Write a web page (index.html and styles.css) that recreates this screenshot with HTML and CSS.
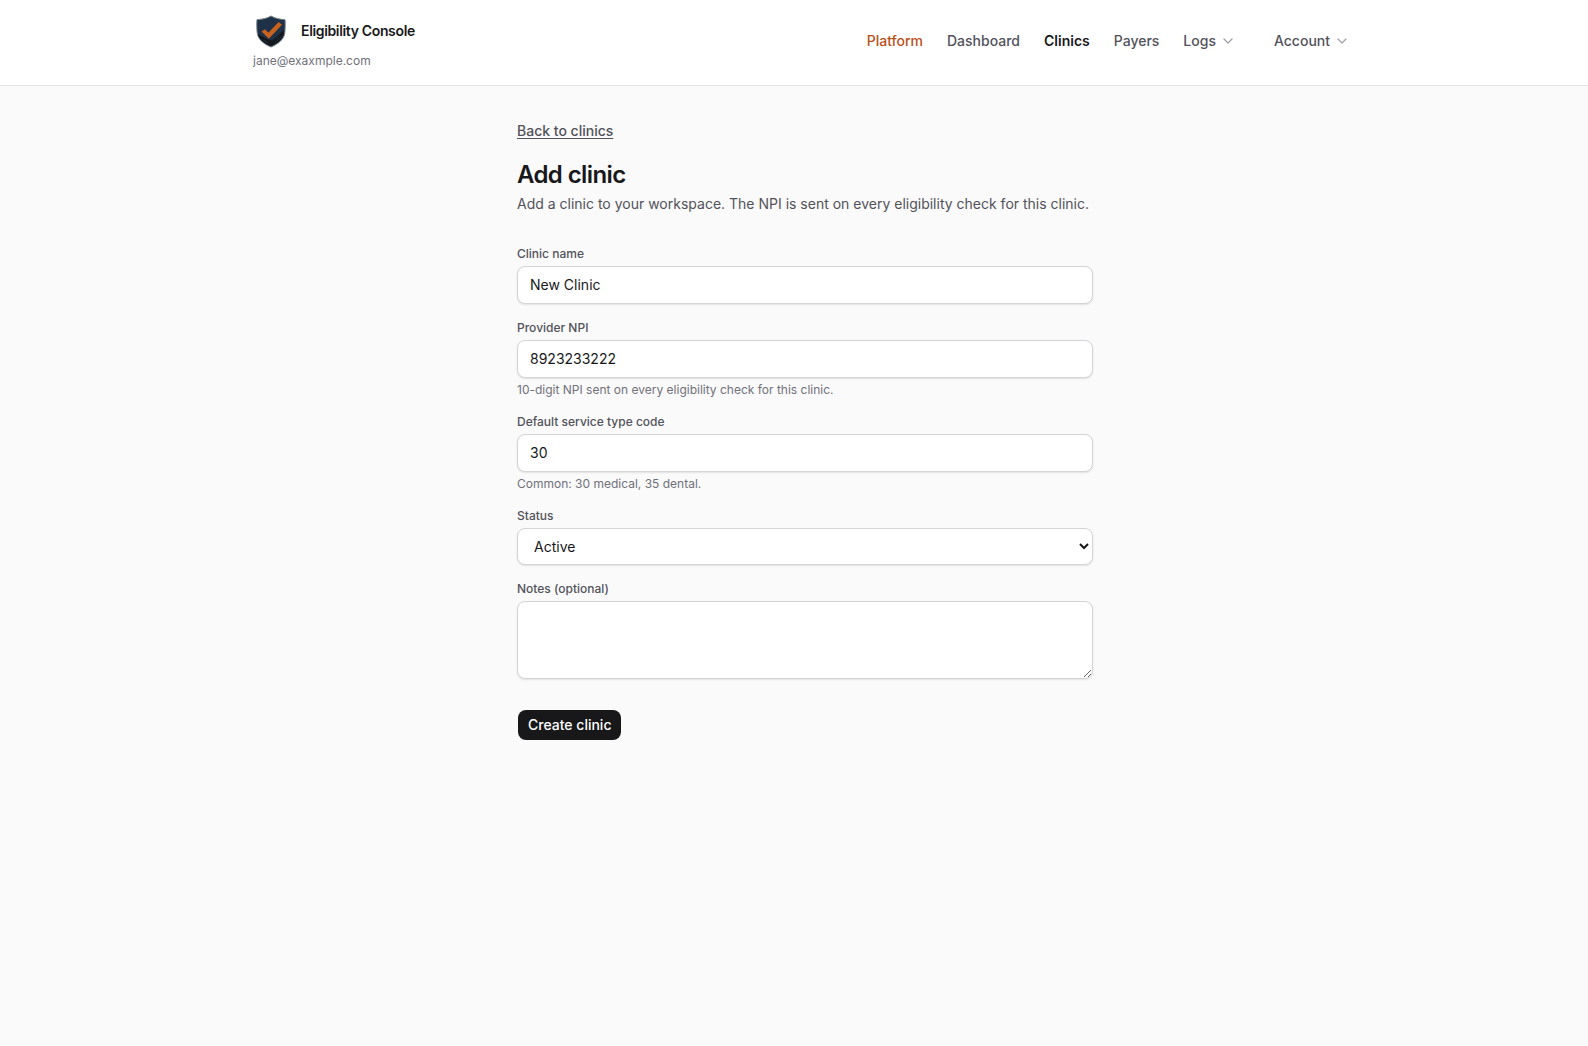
FILE: index.html
```html
<!DOCTYPE html>
<html lang="en">
<head>
  <meta charset="UTF-8">
  <meta name="viewport" content="width=device-width, initial-scale=1.0">
  <title>Add clinic - Eligibility Console</title>
  <link rel="stylesheet" href="styles.css">
</head>
<body>
  <header class="site-header">
    <div class="header-inner">
      <div class="brand">
        <a class="brand-link" href="#">
          <svg class="brand-logo" viewBox="0 0 36 36" aria-hidden="true">
            <path d="M18 3 C22 5.4 27 6.4 32 6.6 C32.4 9 32.3 16 31.8 20 C31 27 24 31.500 18 34 C12 31.500 5 27 4.200 20 C3.700 16 3.600 9 4 6.600 C9 6.400 14 5.400 18 3Z" fill="#1f3147" stroke="#7d858d" stroke-width="1"/>
            <path d="M5 21 L14 26 L19 27.500 L31 17 L31 20 C30 27 23 31 18 33.200 C12 31 6 27 5 21Z" fill="#15191e"/>
            <path d="M10 27 L15 30 M22 26.500 L26 22.500 M22 29.500 L28.500 23.500" stroke="#1f3147" stroke-width="1" fill="none"/>
            <path d="M8.500 18.500 L12 16.300 L15.400 19.800 L25.600 9 L29 11.800 L15.800 25.800Z" fill="#c8621f"/>
          </svg>
          <span>Eligibility Console</span>
        </a>
        <p class="brand-user">jane@exaxmple.com</p>
      </div>
      <nav class="nav">
        <a class="nav-platform" href="#">Platform</a>
        <a href="#">Dashboard</a>
        <a class="active" href="#" aria-current="page">Clinics</a>
        <a href="#">Payers</a>
        <button type="button">Logs
          <svg class="chevron" viewBox="0 0 12 12" aria-hidden="true"><path d="M2 4 L6 8 L10 4"/></svg>
        </button>
        <button class="nav-account" type="button">Account
          <svg class="chevron" viewBox="0 0 12 12" aria-hidden="true"><path d="M2 4 L6 8 L10 4"/></svg>
        </button>
      </nav>
    </div>
  </header>

  <main class="page">
    <a class="back-link" href="#">Back to clinics</a>
    <h1>Add clinic</h1>
    <p class="intro">Add a clinic to your workspace. The NPI is sent on every eligibility check for this clinic.</p>

    <form class="clinic-form">
      <div class="field">
        <label for="name">Clinic name</label>
        <input id="name" type="text" value="New Clinic">
      </div>
      <div class="field">
        <label for="npi">Provider NPI</label>
        <input id="npi" type="text" inputmode="numeric" value="8923233222">
        <p class="hint">10-digit NPI sent on every eligibility check for this clinic.</p>
      </div>
      <div class="field">
        <label for="service-type">Default service type code</label>
        <input id="service-type" type="text" value="30">
        <p class="hint">Common: 30 medical, 35 dental.</p>
      </div>
      <div class="field">
        <label for="status">Status</label>
        <select id="status">
          <option selected>Active</option>
          <option>Inactive</option>
        </select>
      </div>
      <div class="field">
        <label for="notes">Notes (optional)</label>
        <textarea id="notes" rows="3"></textarea>
      </div>
      <button class="submit" type="submit">Create clinic</button>
    </form>
  </main>
</body>
</html>
```
FILE: styles.css
```css
* {
  box-sizing: border-box;
}

body {
  margin: 0;
  background: #fafafa;
  color: #18181b;
  font-family: Inter, "Liberation Sans", sans-serif;
  font-size: 14px;
  line-height: 20px;
}

h1, p {
  margin: 0;
}

.site-header {
  padding-left: 22px;
  background: #fff;
  border-bottom: 1px solid #e4e4e7;
}

.header-inner {
  display: flex;
  justify-content: space-between;
  align-items: center;
  max-width: 1152px;
  margin: 0 auto;
  padding: 13px 24px 16px;
}

.brand-link {
  display: flex;
  align-items: center;
  gap: 12px;
  color: #18181b;
  font-weight: 600;
  letter-spacing: -0.025em;
  text-decoration: none;
}

.brand-logo {
  width: 36px;
  height: 36px;
}

.brand-user {
  margin-top: 4px;
  color: #71717a;
  font-size: 12px;
  line-height: 16px;
}

.nav {
  display: flex;
  align-items: center;
  gap: 24px;
  padding-right: 9px;
}

.nav a, .nav button {
  display: flex;
  align-items: center;
  gap: 6px;
  padding: 0;
  background: none;
  border: none;
  color: #52525b;
  font: inherit;
  font-weight: 500;
  text-decoration: none;
}

.nav .nav-platform {
  color: #b9501a;
}

.nav .active {
  color: #18181b;
  font-weight: 600;
}

.nav .nav-account {
  margin-left: 16px;
}

.chevron {
  width: 12px;
  height: 12px;
  fill: none;
  stroke: #a1a1aa;
  stroke-width: 1.3;
  stroke-linecap: round;
  stroke-linejoin: round;
}

.page {
  padding: 35px 0 48px 22px;
}

.page > * {
  display: block;
  max-width: 576px;
  margin-left: auto;
  margin-right: auto;
}

.back-link {
  color: #52525b;
  font-weight: 500;
  text-underline-offset: 2px;
}

h1 {
  margin-top: 18px;
  font-size: 24px;
  font-weight: 600;
  line-height: 32px;
  letter-spacing: -0.025em;
}

.intro {
  margin-top: 3px;
  color: #52525b;
}

.clinic-form {
  margin-top: 32px;
}

.field {
  display: flex;
  flex-direction: column;
  gap: 4px;
  margin-bottom: 16px;
}

.field label {
  color: #52525b;
  font-size: 12px;
  font-weight: 500;
  line-height: 16px;
}

.field input, .field select, .field textarea {
  width: 100%;
  padding: 8px 12px;
  background-color: #fff;
  border: 1px solid #d4d4d8;
  border-radius: 8px;
  box-shadow: 0 1px 2px rgba(0, 0, 0, 0.1);
  color: #18181b;
  font: inherit;
}

.field select {
  height: 37px;
}

.field textarea {
  display: block;
  resize: vertical;
}

.hint {
  color: #71717a;
  font-size: 12px;
  line-height: 16px;
}

.submit {
  margin: 15px 0 0 1px;
  padding: 5px 10px;
  background: #18181b;
  border: none;
  border-radius: 8px;
  color: #fff;
  font: inherit;
  font-weight: 500;
}
```
